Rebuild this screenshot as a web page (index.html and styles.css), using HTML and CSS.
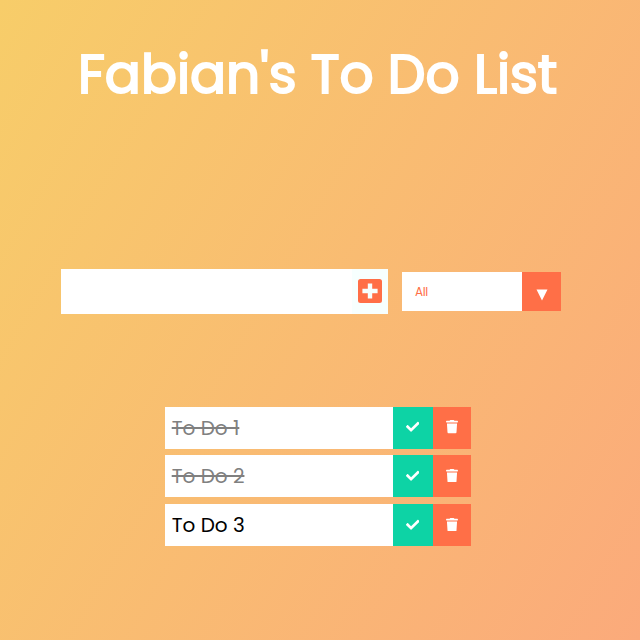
FILE: index.html
```html
<!DOCTYPE html>
<html lang="en">
<head>
<meta charset="utf-8">
<title>Fabian's To Do List</title>
<link rel="stylesheet" href="styles.css">
</head>
<body>
<svg width="0" height="0" class="defs">
  <symbol id="check" viewBox="0 0 512 512"><path d="M173.898 439.404l-166.4-166.4c-9.997-9.997-9.997-26.206 0-36.204l36.203-36.204c9.997-9.998 26.207-9.998 36.204 0L192 312.69 432.095 72.596c9.997-9.997 26.207-9.997 36.204 0l36.203 36.204c9.997 9.997 9.997 26.206 0 36.204l-294.4 294.401c-9.998 9.997-26.207 9.997-36.204-.001z"/></symbol>
  <symbol id="trash" viewBox="0 0 448 512"><path d="M432 32H312l-9.400-18.700A24 24 0 0 0 281.100 0H166.800a23.720 23.720 0 0 0-21.400 13.300L136 32H16A16 16 0 0 0 0 48v32a16 16 0 0 0 16 16h416a16 16 0 0 0 16-16V48a16 16 0 0 0-16-16zM53.200 467a48 48 0 0 0 47.900 45h245.800a48 48 0 0 0 47.900-45L416 128H32z"/></symbol>
</svg>
<header><h1>Fabian's To Do List</h1></header>
<form>
  <div class="field">
    <div class="entry"></div>
    <button type="button" class="add" aria-label="Add"><svg viewBox="0 0 24 24"><path fill-rule="evenodd" d="M2.500 0h19A2.500 2.500 0 0 1 24 2.500v19a2.500 2.500 0 0 1-2.500 2.500h-19A2.500 2.500 0 0 1 0 21.500v-19A2.500 2.500 0 0 1 2.500 0zM9.800 4.400v5.400H4.400v4.400h5.400v5.400h4.400v-5.400h5.400V9.800h-5.400V4.400z"/></svg></button>
  </div>
  <div class="select"><span class="value">All</span><span class="arrow"><svg viewBox="0 0 12 12"><path d="M0.500 0.500h11L6 11.500z"/></svg></span></div>
</form>
<ul>
  <li><span class="text done">To Do 1</span><span class="btn ok"><svg><use href="#check"/></svg></span><span class="btn del"><svg><use href="#trash"/></svg></span></li>
  <li><span class="text done">To Do 2</span><span class="btn ok"><svg><use href="#check"/></svg></span><span class="btn del"><svg><use href="#trash"/></svg></span></li>
  <li><span class="text">To Do 3</span><span class="btn ok"><svg><use href="#check"/></svg></span><span class="btn del"><svg><use href="#trash"/></svg></span></li>
</ul>
</body>
</html>
```
FILE: styles.css
```css
* { margin: 0; padding: 0; box-sizing: border-box; }
body {
  min-height: 640px;
  overflow: hidden;
  background: linear-gradient(120deg, #f7cd69, #fbaa7b);
  font-family: Poppins, Inter, "Open Sans", sans-serif;
}
.defs { display: block; }
header { height: 269px; padding-top: 35px; }
h1 { padding-left: 78px; font-size: 53.300px; line-height: 80px; font-weight: 400; -webkit-text-stroke: 2px #fff; color: #fff; white-space: nowrap; }
form { display: flex; align-items: center; padding-left: 61.300px; height: 44.500px; }
.field { display: flex; width: 327px; height: 44.500px; background: #fff; }
.entry { flex: 1; }
.add { display: flex; align-items: flex-start; width: 36.500px; border: 0; background: #f7fffe; padding: 9.500px 6px 0 6.500px; }
.add svg { display: block; width: 24px; height: 24px; fill: #ff6f47; }
.select { display: flex; width: 159.700px; height: 39.500px; margin-left: 13.300px; background: #fff; }
.value { flex: 1; padding-left: 13.500px; font-size: 12px; letter-spacing: -0.400px; line-height: 40px; color: #ff6f47; }
.arrow { display: flex; justify-content: center; width: 39.500px; padding-top: 17px; background: #ff6f47; }
.arrow svg { width: 12px; height: 12px; fill: #fff; }
ul { list-style: none; display: grid; gap: 6.700px; width: 306.300px; margin: 93px 0 0 164.700px; }
li { display: flex; height: 42px; background: #fff; }
.text { flex: 1; padding-left: 7px; font-size: 20px; line-height: 42px; color: #000; }
.done { color: #808080; text-decoration: line-through; }
.btn { display: flex; align-items: center; justify-content: center; }
.btn svg { fill: #fff; margin-top: -1px; }
.ok { width: 40px; background: #0dd3a5; }
.ok svg { width: 13.500px; height: 13.500px; }
.del { width: 38.300px; background: #ff6f47; }
.del svg { width: 12px; height: 13.500px; }
```
